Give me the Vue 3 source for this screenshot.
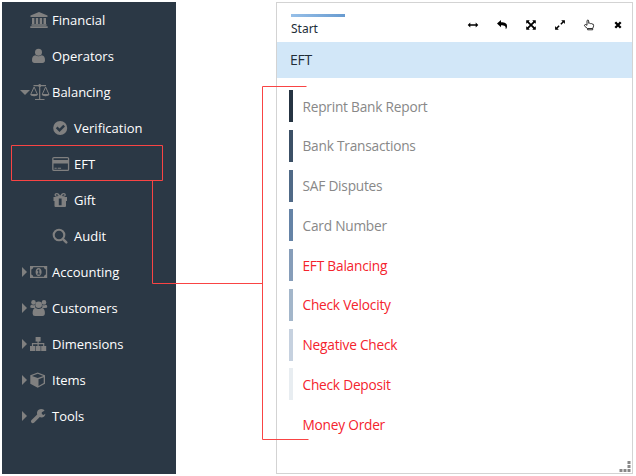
<script setup>
const icons = {
  bank: '<path d="M9 1 17.500 4.500V6H.5V4.500zM2 7h2.400v6H2zM5.800 7h2.400v6H5.800zM9.700 7h2.400v6H9.700zM13.500 7h2.500v6h-2.500zM1.500 13.300h15v1.400h-15zM.300 15.300h17.400V17H.300z"/>',
  user: '<circle cx="8.500" cy="5.300" r="3.500"/><path d="M5.300 8.200Q8.500 10.500 11.700 8.200C14 8.200 15 10.500 15 13.200 15 15 14 16 12.500 16h-8C3 16 2 15 2 13.200 2 10.500 3 8.200 5.300 8.200z"/>',
  scale: '<path d="M3.500 2.700h12.500M9.700 1.500V16M5 16.500h9.500" fill="none" stroke="currentColor" stroke-width="1.200"/><circle cx="9.700" cy="2.600" r="1.500"/><path d="M.900 11 4.100 4l3.200 7M12.400 11l3.200-7 3.200 7" fill="none" stroke="currentColor"/><path d="M.200 11h7.800c0 3-7.800 3-7.800 0zM11.700 11h7.800c0 3-7.800 3-7.800 0z"/>',
  check: '<path fill-rule="evenodd" d="M8.200 2a7 7 0 1 1 0 14 7 7 0 0 1 0-14zM3.800 9.200l3.700 3.700L13 7.400l-1.700-1.600-3.800 3.700-2-2z"/>',
  card: '<path fill-rule="evenodd" d="M2 2h13.500Q17.200 2 17.200 3.500v11Q17.200 16 15.500 16H2Q.200 16 .200 14.500v-11Q.200 2 2 2zM1.500 3.300v1.700h14.400V3.300zM1.500 8.500v6.300h14.400V8.500z"/><path d="M2.500 12.700h2.200v1H2.500zM5.700 12.700h3.400v1H5.700z"/>',
  gift: '<path fill-rule="evenodd" d="M1.500 6h5.200L4.500 5.800C1.600 5.200 2.200 2 4.700 2 6.500 2 7.400 3.400 8.200 4.600 9 3.400 9.900 2 11.700 2c2.500 0 3.100 3.200.200 3.800L9.700 6H15v4h-1v5q0 1-1 1H3.500q-1 0-1-1v-5h-1zM4.700 3.200c-1.200 0-1.200 1.600 0 1.600h2C6 3.800 5.400 3.200 4.700 3.200zm7 0c-.700 0-1.300.600-2 1.600h2c1.200 0 1.200-1.600 0-1.600zM6.800 7.500v6.700h2.800V7.500z"/>',
  search: '<circle cx="7" cy="8" r="5.300" fill="none" stroke="currentColor" stroke-width="2.100"/><path d="m11 12.100 3.300 3.300" fill="none" stroke="currentColor" stroke-width="2.500" stroke-linecap="round"/>',
  money: '<path fill-rule="evenodd" d="M0 3h17.200v12H0zM3.300 4.300Q3 6 1.300 6.500v5Q3 12 3.300 13.700h10.600q.300-1.700 2-2.200v-5q-1.700-.500-2-2.200z"/><path fill-rule="evenodd" d="M8.600 5c4 0 4 8 0 8s-4-8 0-8zM7.200 7.600l.500.700.500-.400V10.500h-.900v.900h2.900v-.900h-.900V6.500h-.900z"/>',
  users: '<circle cx="3.500" cy="3.400" r="2.300"/><circle cx="14" cy="3.400" r="2.300"/><path d="M2 5.700q1.700 1 3.300 0Q4.800 8 5.600 9H3Q.200 9.200.200 7.900.200 5.600 2 5.700zM15.500 5.700q-1.700 1-3.300 0 .500 2.300-.300 3.300h2.600q2.800.200 2.800-1.100 0-2.300-1.800-2.200z"/><circle cx="8.700" cy="5.800" r="3.300"/><path d="M5.700 9q3 2.200 6 0c2.300 0 3.200 2 3.200 5Q14.900 17 12.500 17H5Q2.600 17 2.600 14.500C2.600 11 3.500 9 5.700 9z"/>',
  sitemap: '<path d="M5.600 2h5v4.500h-5zM0 11h5v5H0zM5.600 11h5v5h-5zM11.200 11h5v5h-5z"/><path d="M8.100 6v5M2.500 11V8.700h11.200V11" fill="none" stroke="currentColor" stroke-width="1.200"/>',
  cube: '<path fill-rule="evenodd" d="m7.700 1.500 7.300 2.700v8.600l-7.300 4-7.400-4V4.200zM7.700 2.800 2 4.900 7.700 7l5.700-2.100zM8.500 8.300v6.600l5.200-2.800V6.300z"/>',
  wrench: '<path d="M15.400 4.200 12.800 5.700V7.600l1.600.900 2-1.200C16.300 9.500 14.500 11 12.500 11c-.800 0-1.300-.200-1.700-.400L5 16.300c-1.600 1.200-4-.600-2.700-2.500L8.200 8c-.700-3 1-5.300 3.800-5.400 1.200 0 2.300.400 3.200 1z" transform="translate(-1 -.5)"/>'
}
const menu = [
  { label: 'Financial', icon: 'bank' },
  { label: 'Operators', icon: 'user' },
  { label: 'Balancing', icon: 'scale', caret: 'down' },
  { label: 'Verification', icon: 'check', sub: true },
  { label: 'EFT', icon: 'card', sub: true },
  { label: 'Gift', icon: 'gift', sub: true },
  { label: 'Audit', icon: 'search', sub: true },
  { label: 'Accounting', icon: 'money', caret: 'right' },
  { label: 'Customers', icon: 'users', caret: 'right' },
  { label: 'Dimensions', icon: 'sitemap', caret: 'right' },
  { label: 'Items', icon: 'cube', caret: 'right' },
  { label: 'Tools', icon: 'wrench', caret: 'right' }
]
const tools = [
  { name: 'Resize width', art: '<path d="M.700 6 3.300 3.500V5.300h5.400V3.500L11.300 6 8.700 8.500V6.700H3.300v1.800z"/>' },
  { name: 'Back', art: '<path d="M1 4.600 5 1v2.200c4 0 6 1 6 4 0 1.300-.500 2.200-1.300 3C10 7.200 8.500 6.300 5 6.300v2z"/>' },
  { name: 'Expand', art: '<path d="M1.200 1.200h3.500L3.700 2.400 6 4.800l2.300-2.400-1-1.200h3.500v3.500l-1.100-1L7.200 6l2.500 2.300 1.100-1v3.500H7.300l1-1.200L6 7.200 3.700 9.600l1 1.200H1.200V7.300l1.100 1L4.800 6 2.300 3.700l-1.100 1z"/>' },
  { name: 'Maximize', art: '<path d="M7.200 1.200h3.700v3.700L9.600 3.600 7.400 5.800 6.300 4.700l2.200-2.200zM5.700 7.300 3.500 9.500l1.300 1.300H1.100V7.100l1.300 1.300 2.200-2.200z"/>' },
  { name: 'Select', art: '<path d="M4 6.300V2c0-1.300 1.700-1.300 1.700 0v2.300q1-.500 1.700.300 1-.400 1.600.400 1.600-.300 1.600 1.300 0 1.700-.900 3v1.500H4.600V9.600L1.700 7.200C.900 6 2.200 5.100 3 5.700zM4.600 9.500h5" fill="none" stroke="currentColor" stroke-width=".8"/>' },
  { name: 'Close', art: '<path d="m3.300 3.300 5.400 5.400M8.700 3.300 3.300 8.700" fill="none" stroke="currentColor" stroke-width="2.300"/>' }
]
const entries = [
  { label: 'Reprint Bank Report', tone: 't1' },
  { label: 'Bank Transactions', tone: 't2' },
  { label: 'SAF Disputes', tone: 't3' },
  { label: 'Card Number', tone: 't4' },
  { label: 'EFT Balancing', tone: 't5', red: true },
  { label: 'Check Velocity', tone: 't6', red: true },
  { label: 'Negative Check', tone: 't7', red: true },
  { label: 'Check Deposit', tone: 't8', red: true },
  { label: 'Money Order', tone: 't9', red: true }
]
</script>

<template>
  <main class="page">
    <nav class="sidebar">
      <div v-for="m in menu" :key="m.label" class="row" :class="{ sub: m.sub }">
        <span class="caret" :class="m.caret"></span>
        <svg class="icon" viewBox="0 0 20 18" v-html="icons[m.icon]"></svg>
        <span class="label">{{ m.label }}</span>
      </div>
    </nav>
    <section class="panel">
      <header class="head">
        <div class="tab"><i class="accent"></i><span class="start">Start</span></div>
        <div class="tools">
          <svg v-for="t in tools" :key="t.name" viewBox="0 0 12 12" v-html="t.art"></svg>
        </div>
      </header>
      <h1 class="title"><span>EFT</span></h1>
      <ul class="list">
        <li v-for="e in entries" :key="e.label" :class="{ red: e.red }">
          <i class="bar" :class="e.tone"></i><span class="text">{{ e.label }}</span>
        </li>
      </ul>
      <svg class="grip" viewBox="0 0 12 12"><path d="M8.500 0h3v3h-3zM8.500 4h3v3h-3zM.500 8h3v3h-3zM4.500 8h3v3h-3zM8.500 8h3v3h-3z" /></svg>
    </section>
    <svg class="connector" viewBox="0 0 636 476">
      <path d="M11.500 145.500h151v35h-151zM152.500 180.500v103h110M306.500 86.500h-44v353h46" />
    </svg>
  </main>
</template>

<style>
body { margin: 0; background: #fff; }
</style>
<style scoped>
.page { position: relative; display: flex; gap: 100px; width: 636px; height: 476px; padding: 2px; box-sizing: border-box; font-family: "Open Sans", "Noto Sans", sans-serif; background: #fff; overflow: hidden; }
.sidebar { width: 174px; height: 472px; background: #2b3845; flex: none; }
.row { display: flex; align-items: center; height: 36px; padding-left: 18px; }
.row.sub { padding-left: 40px; }
.caret { width: 10px; display: flex; flex: none; }
.caret.down::before { content: ""; border: 5px solid transparent; border-top-color: #808080; border-bottom: 0; }
.caret.right::before { content: ""; margin-left: 2px; border: 5px solid transparent; border-left-color: #808080; border-right: 0; }
.icon { width: 20px; height: 18px; flex: none; color: #808080; fill: currentColor; }
.label { margin-left: 2px; font-size: 13px; line-height: 18px; color: #fff; white-space: nowrap; }
.panel { position: relative; width: 357px; height: 472px; box-sizing: border-box; border: 1px solid #d3d3d3; flex: none; }
.head { display: flex; justify-content: space-between; height: 39px; }
.tab { display: flex; flex-direction: column; padding: 11px 0 0 14px; }
.accent { width: 54px; height: 3px; background: linear-gradient(90deg, #96bfe8, #689bd0); }
.start { margin-top: 3px; font: 12px/18px "Noto Sans", sans-serif; color: #222d38; }
.tools { display: flex; gap: 17px; padding: 16px 8px 0 0; }
.tools svg { width: 12px; height: 12px; fill: currentColor; color: #000; }
.title { display: flex; align-items: center; height: 36px; margin: 0; padding-left: 13px; background: #d2e7f8; font: 14px/20px "Open Sans", sans-serif; letter-spacing: -.2px; color: #222d38; }
.list { list-style: none; margin: 0; padding: 8.3px 0 0 12px; }
.list li { display: flex; align-items: center; height: 39.75px; font: 13.7px/20px "Open Sans", sans-serif; letter-spacing: -.22px; color: #888; }
.list li.red { color: #f4232d; }
.text { padding-top: 1px; }
.bar { width: 3.7px; height: 32px; margin-right: 9.8px; }
.t1 { background: #263442; } .t2 { background: #3c5066; } .t3 { background: #506a87; }
.t4 { background: #6583a6; } .t5 { background: #869db9; } .t6 { background: #a3b6ca; }
.t7 { background: #c6d1df; } .t8 { background: #e8edf1; } .t9 { background: #fff; }
.grip { position: absolute; right: 1px; bottom: 0; width: 12px; height: 12px; fill: #888; }
.connector { position: absolute; inset: 0; width: 636px; height: 476px; fill: none; stroke: #f94444; stroke-width: 1; pointer-events: none; }
</style>
